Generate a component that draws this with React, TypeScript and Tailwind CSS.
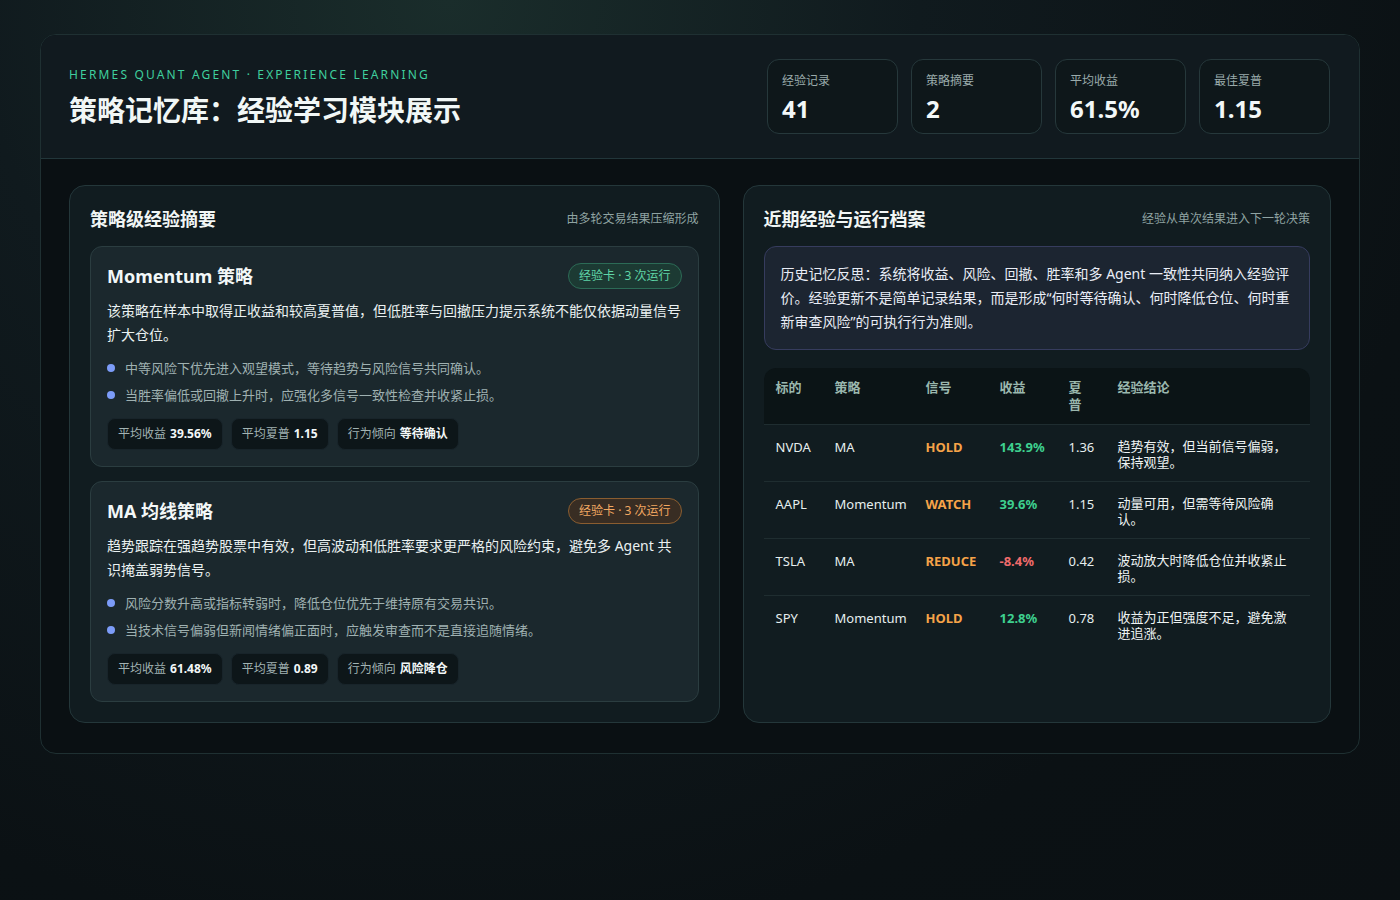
const FONT = { fontFamily: '"Segoe UI", "Noto Sans", "Noto Sans CJK SC", sans-serif' };

const stats = [
  { label: '经验记录', value: '41' },
  { label: '策略摘要', value: '2' },
  { label: '平均收益', value: '61.5%' },
  { label: '最佳夏普', value: '1.15' },
];

type Strategy = {
  title: string;
  tone: 'green' | 'orange';
  desc: string;
  bullets: string[];
  chips: { label: string; value: string }[];
};

const strategies: Strategy[] = [
  {
    title: 'Momentum 策略',
    tone: 'green',
    desc: '该策略在样本中取得正收益和较高夏普值，但低胜率与回撤压力提示系统不能仅依据动量信号扩大仓位。',
    bullets: [
      '中等风险下优先进入观望模式，等待趋势与风险信号共同确认。',
      '当胜率偏低或回撤上升时，应强化多信号一致性检查并收紧止损。',
    ],
    chips: [
      { label: '平均收益', value: '39.56%' },
      { label: '平均夏普', value: '1.15' },
      { label: '行为倾向', value: '等待确认' },
    ],
  },
  {
    title: 'MA 均线策略',
    tone: 'orange',
    desc: '趋势跟踪在强趋势股票中有效，但高波动和低胜率要求更严格的风险约束，避免多 Agent 共识掩盖弱势信号。',
    bullets: [
      '风险分数升高或指标转弱时，降低仓位优先于维持原有交易共识。',
      '当技术信号偏弱但新闻情绪偏正面时，应触发审查而不是直接追随情绪。',
    ],
    chips: [
      { label: '平均收益', value: '61.48%' },
      { label: '平均夏普', value: '0.89' },
      { label: '行为倾向', value: '风险降仓' },
    ],
  },
];

const rows = [
  { sym: 'NVDA', strat: 'MA', sig: 'HOLD', ret: '143.9%', up: true, sharpe: '1.36', note: '趋势有效，但当前信号偏弱，保持观望。' },
  { sym: 'AAPL', strat: 'Momentum', sig: 'WATCH', ret: '39.6%', up: true, sharpe: '1.15', note: '动量可用，但需等待风险确认。' },
  { sym: 'TSLA', strat: 'MA', sig: 'REDUCE', ret: '-8.4%', up: false, sharpe: '0.42', note: '波动放大时降低仓位并收紧止损。' },
  { sym: 'SPY', strat: 'Momentum', sig: 'HOLD', ret: '12.8%', up: true, sharpe: '0.78', note: '收益为正但强度不足，避免激进追涨。' },
];

export default function App() {
  return (
    <div
      style={FONT}
      className="min-h-screen bg-[radial-gradient(ellipse_at_32%_0%,#1a2d2b_0%,#101a1e_35%,#0b1114_75%,#0b1013_100%)] px-10 pt-[34px] pb-10 text-[#e6eeee]"
    >
      <div className="overflow-hidden rounded-2xl border border-[#1f3032] bg-[#0a1013]">
        {/* Header */}
        <header className="flex items-start justify-between border-b border-[#22363a] bg-[#111a1f] pl-7 pr-[29px] pt-6 pb-6">
          <div className="pt-[7px]">
            <p className="text-[12px] leading-[17px] uppercase tracking-[0.18em] text-[#3fcf9e]">
              Hermes Quant Agent · Experience Learning
            </p>
            <h1 className="mt-[9px] text-[28px] font-bold leading-[36px] text-[#f1f7f6]">
              策略记忆库：经验学习模块展示
            </h1>
          </div>
          <div className="flex gap-[13px]">
            {stats.map((s) => (
              <div
                key={s.label}
                className="h-[75px] w-[131px] rounded-xl border border-[#26383b] bg-[#0e171a] px-[14px] pt-[12px]"
              >
                <p className="text-[12px] leading-[18px] text-[#9aabab]">{s.label}</p>
                <p className="mt-[4px] text-[24px] font-bold leading-[30px] text-[#f3f8f8]">{s.value}</p>
              </div>
            ))}
          </div>
        </header>

        {/* Body */}
        <div className="grid grid-cols-[650fr_588fr] gap-[23px] px-7 pt-[26px] pb-[30px]">
          {/* Left panel */}
          <section className="min-w-0 rounded-2xl border border-[#24373a] bg-[#111c20] px-5 pt-5 pb-5">
            <PanelHeader title="策略级经验摘要" hint="由多轮交易结果压缩形成" />
            <div className="mt-[14px] flex flex-col gap-[14px]">
              {strategies.map((s) => (
                <StrategyCard key={s.title} s={s} />
              ))}
            </div>
          </section>

          {/* Right panel */}
          <section className="min-w-0 rounded-2xl border border-[#24373a] bg-[#111c20] px-5 pt-5 pb-5">
            <PanelHeader title="近期经验与运行档案" hint="经验从单次结果进入下一轮决策" />
            <div className="mt-[14px] rounded-xl border border-[#363c5e] bg-[#1c2531] px-4 py-[15px] text-[14px] leading-[24px] text-[#e9edf6]">
              历史记忆反思：系统将收益、风险、回撤、胜率和多 Agent 一致性共同纳入经验评价。经验更新不是简单记录结果，而是形成“何时等待确认、何时降低仓位、何时重新审查风险”的可执行行为准则。
            </div>
            <div className="mt-[18px] overflow-hidden rounded-t-xl">
              <table className="w-full table-fixed border-collapse text-left text-[13px]">
                <colgroup>
                  <col className="w-[59px]" />
                  <col className="w-[91px]" />
                  <col className="w-[74px]" />
                  <col className="w-[69px]" />
                  <col className="w-[49px]" />
                  <col />
                </colgroup>
                <thead className="bg-[#0b1416]">
                  <tr className="border-b border-[#1f2d30]">
                    {['标的', '策略', '信号', '收益', '夏普', '经验结论'].map((h) => (
                      <th
                        key={h}
                        className="h-[56px] px-3 pt-[11px] align-top text-[13px] font-bold leading-[17px] text-[#9bb8ae]"
                      >
                        {h}
                      </th>
                    ))}
                  </tr>
                </thead>
                <tbody>
                  {rows.map((r) => (
                    <tr key={r.sym} className="border-b border-[#1f2d30] last:border-b-0">
                      <td className="h-[57px] px-3 pt-[13px] align-top text-[#e6eeee]">{r.sym}</td>
                      <td className="px-3 pt-[13px] align-top text-[#e6eeee]">{r.strat}</td>
                      <td className="px-3 pt-[13px] align-top font-bold text-[#f6a348]">{r.sig}</td>
                      <td
                        className={
                          'px-3 pt-[13px] align-top font-bold ' +
                          (r.up ? 'text-[#3ed08f]' : 'text-[#f06b6b]')
                        }
                      >
                        {r.ret}
                      </td>
                      <td className="px-3 pt-[13px] align-top text-[#e6eeee]">{r.sharpe}</td>
                      <td className="pl-3 pr-5 pt-[13px] pb-2 align-top leading-[16px] text-[#eef3f3]">
                        {r.note}
                      </td>
                    </tr>
                  ))}
                </tbody>
              </table>
            </div>
          </section>
        </div>
      </div>
    </div>
  );
}

function PanelHeader({ title, hint }: { title: string; hint: string }) {
  return (
    <div className="flex h-[26px] items-center justify-between">
      <h2 className="text-[18px] font-bold text-[#f1f6f5]">{title}</h2>
      <span className="text-[12px] text-[#8fa3a2]">{hint}</span>
    </div>
  );
}

function StrategyCard({ s }: { s: Strategy }) {
  return (
    <div className="rounded-xl border border-[#2b3d40] bg-[#1b282d] px-4 pt-4 pb-4">
      <div className="flex h-[26px] items-center justify-between">
        <h3 className="text-[18px] font-bold text-[#f3f8f8]">{s.title}</h3>
        <span
          className={
            'flex h-[26px] items-center rounded-full border px-[10px] text-[12px] ' +
            (s.tone === 'green'
              ? 'border-[#2c6b56] bg-[#1c3a33] text-[#5fd4a6]'
              : 'border-[#8a5d30] bg-[#382d23] text-[#f2a862]')
          }
        >
          经验卡 · 3 次运行
        </span>
      </div>
      <p className="mt-[10px] text-[14px] leading-[24px] text-[#eaf1f1]">{s.desc}</p>
      <ul className="mt-[10px] flex flex-col gap-[5px]">
        {s.bullets.map((b) => (
          <li key={b} className="flex items-center gap-[10px] text-[13px] leading-[22px] text-[#9fb1b1]">
            <span className="h-[8px] w-[8px] shrink-0 rounded-full bg-[#7c9cf8]" />
            {b}
          </li>
        ))}
      </ul>
      <div className="mt-3 flex gap-2">
        {s.chips.map((c) => (
          <span
            key={c.label}
            className="flex h-8 items-center rounded-lg border border-[#18242a] bg-[#0d1619] px-[10px] text-[12px] text-[#a2b3b3]"
          >
            {c.label}
            <b className="ml-1 font-bold text-[#f3f8f8]">{c.value}</b>
          </span>
        ))}
      </div>
    </div>
  );
}
